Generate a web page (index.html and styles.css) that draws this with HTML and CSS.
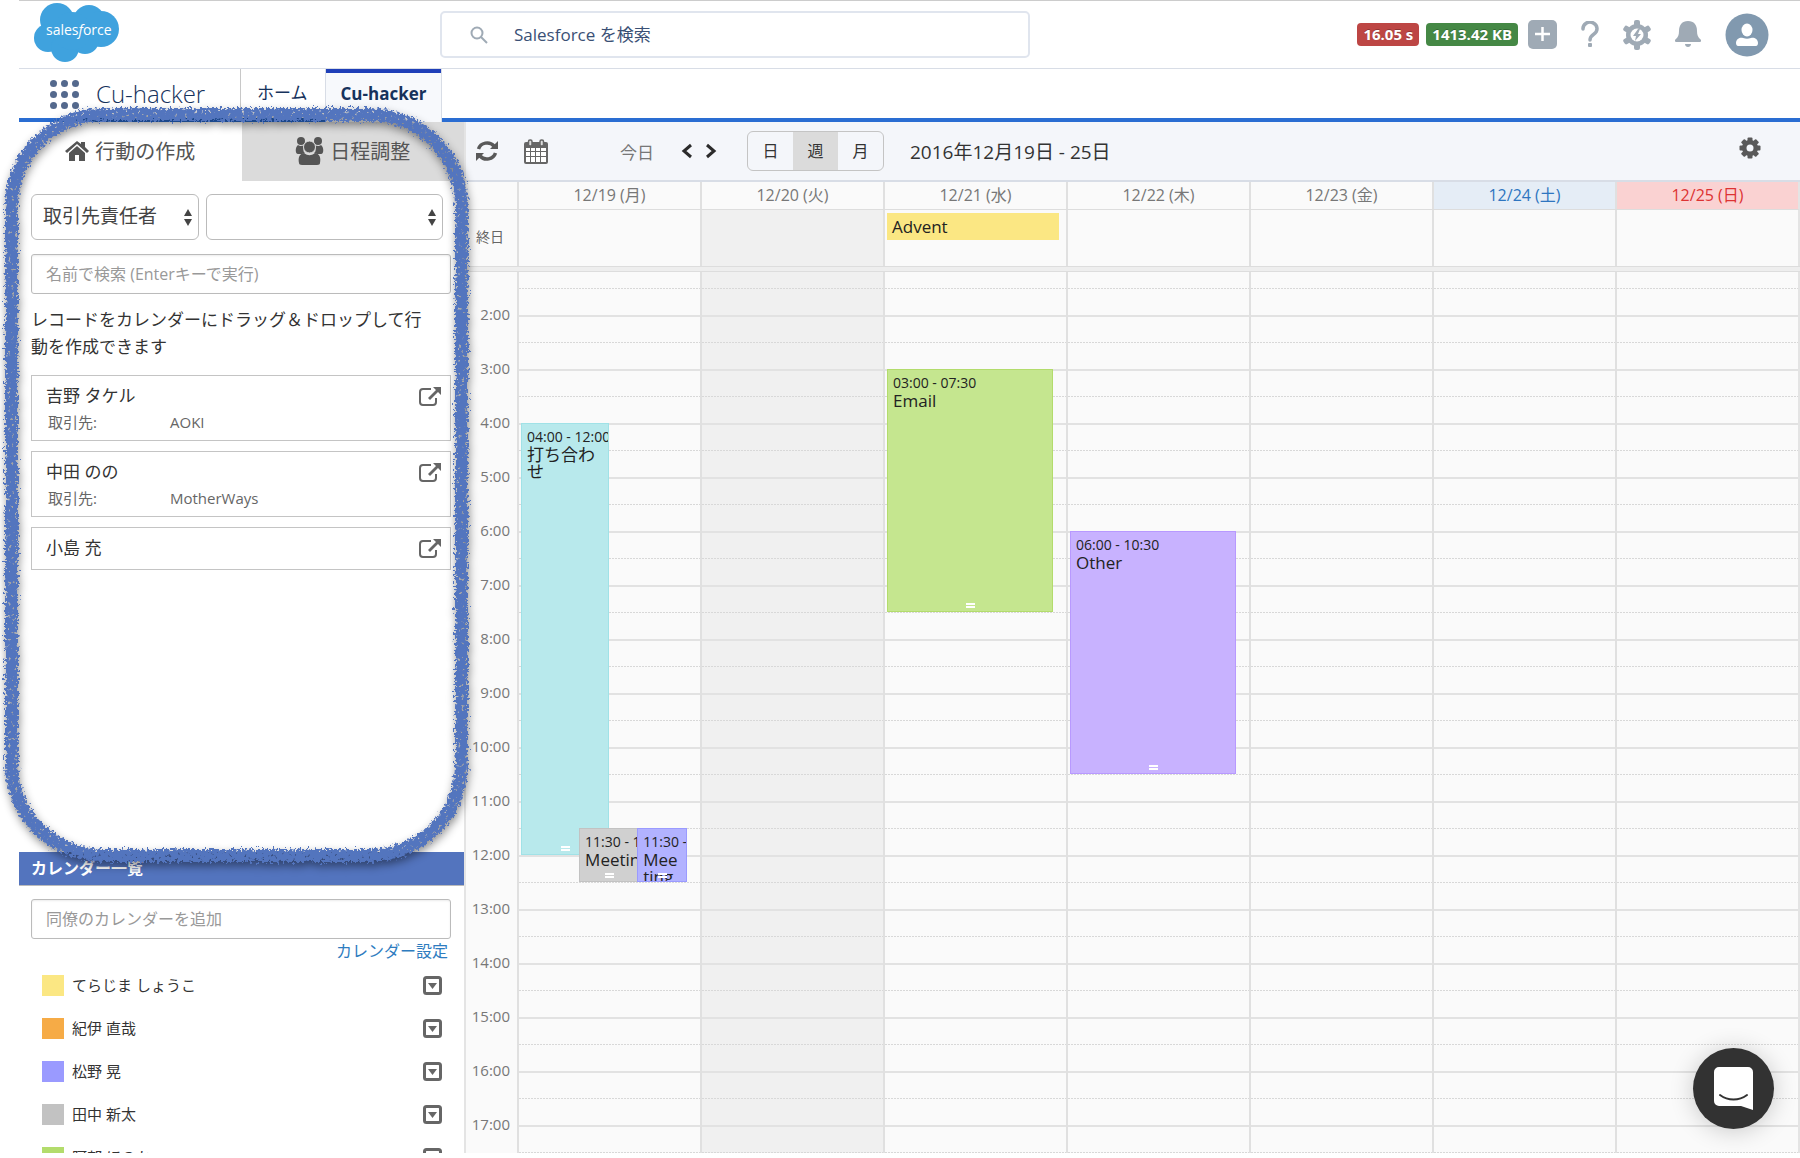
FILE: index.html
```html
<!DOCTYPE html>
<html lang="ja">
<head>
<meta charset="utf-8">
<title>Cu-hacker</title>
<link rel="stylesheet" href="styles.css">
</head>
<body>
<svg class="defs" width="0" height="0" aria-hidden="true">
  <defs>
    <filter id="chalk" x="-5%" y="-5%" width="110%" height="110%">
      <feTurbulence type="fractalNoise" baseFrequency="0.4" numOctaves="2" seed="4" result="noise"/>
      <feDisplacementMap in="SourceGraphic" in2="noise" scale="10" xChannelSelector="R" yChannelSelector="G" result="rough"/>
      <feTurbulence type="fractalNoise" baseFrequency="0.3" numOctaves="2" seed="9"/>
      <feColorMatrix values="0 0 0 0 0  0 0 0 0 0  0 0 0 0 0  -9 0 0 0 6.800" result="grain"/>
      <feComposite in="rough" in2="grain" operator="in"/>
    </filter>
    <symbol id="i-open" viewBox="0 0 22 19">
      <path d="M12 2H4a3 3 0 0 0-3 3v10a3 3 0 0 0 3 3h10a3 3 0 0 0 3-3v-4" fill="none" stroke="currentColor" stroke-width="2"/>
      <path d="M14 0h8v8l-3-3-8 8-2-2 8-8z" fill="currentColor"/>
    </symbol>
    <symbol id="i-drop" viewBox="0 0 19 19">
      <rect x="1.500" y="1.500" width="16" height="16" rx="2" fill="none" stroke="currentColor" stroke-width="3"/>
      <path d="M5 7h9l-4.500 6z" fill="currentColor"/>
    </symbol>
  </defs>
</svg>

<header class="top">
  <svg class="logo" viewBox="0 0 86 60" role="img" aria-label="salesforce">
    <g fill="#3fa2de">
      <circle cx="23" cy="17" r="17"/><circle cx="55" cy="18" r="16"/><circle cx="67" cy="26" r="18"/>
      <circle cx="14" cy="35" r="14"/><circle cx="31" cy="45" r="14"/><circle cx="51" cy="37" r="14"/><circle cx="38" cy="28" r="19"/>
    </g>
    <text x="12" y="32" class="logo-text">sales<tspan font-style="italic">f</tspan>orce</text>
  </svg>
  <label class="global-search">
    <svg width="19" height="19" viewBox="0 0 19 19" fill="none" stroke="#9faab5" stroke-width="2"><circle cx="8" cy="8" r="5.500"/><path d="M12 12l6 6"/></svg>
    <input type="search" placeholder="Salesforce を検索" aria-label="Salesforce を検索">
  </label>
  <div class="tools">
    <span class="badge red">16.05 s</span>
    <span class="badge green">1413.42 KB</span>
    <button class="tool add" aria-label="追加"><svg width="29" height="29" viewBox="0 0 29 29"><rect width="29" height="29" rx="5" fill="#9faab5"/><path d="M14.500 7v14M7 14h15" stroke="#fff" stroke-width="2.500"/></svg></button>
    <button class="tool help" aria-label="ヘルプ"><svg width="18" height="27" viewBox="0 0 18 27"><path d="M2 8a7 6.500 0 1 1 11 5c-3 2-4 3-4 6" fill="none" stroke="#9faab5" stroke-width="3.500" stroke-linecap="round"/><rect x="7" y="22" width="4" height="4" rx="1" fill="#9faab5"/></svg></button>
    <button class="tool setup" aria-label="設定"><svg width="28" height="30" viewBox="-14 -15 28 30"><g fill="#9faab5"><circle r="11"/><g id="tt"><rect x="-3" y="-15" width="6" height="30" rx="2"/></g><use href="#tt" transform="rotate(60)"/><use href="#tt" transform="rotate(120)"/></g><circle r="6.500" fill="#fff"/><path d="M1-6l-5 7h3l-1 5 6-7H1l2-5z" fill="#9faab5"/></svg></button>
    <button class="tool bell" aria-label="通知"><svg width="26" height="27" viewBox="0 0 26 27" fill="#9faab5"><path d="M13 0C7 0 4 4 4 10c0 4-1 6-3 8-2 1-1 3 0 3h24c1 0 2-2 0-3-2-2-3-4-3-8 0-6-3-10-9-10zM10 23h6c0 4-6 4-6 0z"/></svg></button>
    <button class="tool" aria-label="プロフィール"><svg width="44" height="44" viewBox="0 0 44 44"><circle cx="22" cy="22" r="21.500" fill="#8199af"/><ellipse cx="22" cy="17" rx="5.500" ry="6.500" fill="#fff"/><path d="M11 30c0-5 5-6 7-5 3 1 5 1 8 0 2-1 7 0 7 5 0 2-1 3-2 3H13c-1 0-2-1-2-3z" fill="#fff"/></svg></button>
  </div>
</header>

<nav class="nav">
  <button class="launcher" aria-label="アプリケーションランチャー"><i></i><i></i><i></i><i></i><i></i><i></i><i></i><i></i><i></i></button>
  <span class="app-name">Cu-hacker</span>
  <a class="nav-tab" href="#home">ホーム</a>
  <a class="nav-tab active" href="#cu">Cu-hacker</a>
</nav>

<main class="main">
  <aside class="side">
    <section class="create">
      <div class="side-tabs">
        <button class="side-tab"><svg width="24" height="20" viewBox="0 0 24 20" fill="currentColor"><path d="M12 0l4 3V1h4v5l4 4-2 2L12 3 2 12l-2-2z"/><path d="M12 5l8 7v8h-6v-6h-4v6H4v-8z"/></svg>行動の作成</button>
        <button class="side-tab off"><svg width="29" height="28" viewBox="0 0 29 28" fill="currentColor"><circle cx="6" cy="4" r="4"/><circle cx="23" cy="4" r="4"/><path d="M3 8c3 2 5 0 6 1-1 3-1 6 1 7-2 1-4 1-7 1-3 0-3-7 0-9zM26 8c-3 2-5 0-6 1 1 3 1 6-1 7 2 1 4 1 7 1 3 0 3-7 0-9z"/><circle cx="14.500" cy="10" r="6" stroke="#dbdbdb"/><path d="M9 16c4 3 7 3 11 0 5 1 6 5 5 10 0 1-1 2-3 2H7c-2 0-3-1-3-2-1-5 0-9 5-10z"/></svg>日程調整</button>
      </div>
      <div class="create-body">
        <div class="selects">
          <span class="select-box kind"><select aria-label="オブジェクト"><option>取引先責任者</option></select></span>
          <span class="select-box view"><select aria-label="リストビュー"><option></option></select></span>
        </div>
        <input class="field" type="text" placeholder="名前で検索 (Enterキーで実行)" aria-label="名前で検索">
        <p class="hint">レコードをカレンダーにドラッグ＆ドロップして行動を作成できます</p>
        <article class="card"><div><h3>吉野 タケル</h3><dl><dt>取引先:</dt><dd>AOKI</dd></dl></div><a href="#r1" aria-label="開く"><svg width="22" height="19"><use href="#i-open"/></svg></a></article>
        <article class="card"><div><h3>中田 のの</h3><dl><dt>取引先:</dt><dd>MotherWays</dd></dl></div><a href="#r2" aria-label="開く"><svg width="22" height="19"><use href="#i-open"/></svg></a></article>
        <article class="card"><div><h3>小島 充</h3></div><a href="#r3" aria-label="開く"><svg width="22" height="19"><use href="#i-open"/></svg></a></article>
      </div>
      <div class="outline-shadow" aria-hidden="true"><div class="outline"></div></div>
    </section>
    <section class="calendars">
      <h2>カレンダー一覧</h2>
      <input class="field" type="text" placeholder="同僚のカレンダーを追加" aria-label="同僚のカレンダーを追加">
      <a class="cal-settings" href="#settings">カレンダー設定</a>
      <ul>
        <li><i class="swatch yellow"></i><span>てらじま しょうこ</span><button aria-label="メニュー"><svg width="19" height="19"><use href="#i-drop"/></svg></button></li>
        <li><i class="swatch orange"></i><span>紀伊 直哉</span><button aria-label="メニュー"><svg width="19" height="19"><use href="#i-drop"/></svg></button></li>
        <li><i class="swatch violet"></i><span>松野 晃</span><button aria-label="メニュー"><svg width="19" height="19"><use href="#i-drop"/></svg></button></li>
        <li><i class="swatch gray"></i><span>田中 新太</span><button aria-label="メニュー"><svg width="19" height="19"><use href="#i-drop"/></svg></button></li>
        <li><i class="swatch lime"></i><span>阿部 ほのか</span><button aria-label="メニュー"><svg width="19" height="19"><use href="#i-drop"/></svg></button></li>
      </ul>
    </section>
  </aside>

  <section class="week">
    <div class="bar">
      <button class="ico refresh" aria-label="更新"><svg width="22" height="22" viewBox="0 0 22 22"><g fill="none" stroke="#595959" stroke-width="3.500"><path d="M2.500 9A9 8.500 0 0 1 18 6"/><path d="M19.500 13A9 8.500 0 0 1 4 16"/></g><path d="M22 1v8h-8zM0 21v-8h8z" fill="#595959"/></svg></button>
      <button class="ico cal" aria-label="カレンダー"><svg width="24" height="25" viewBox="0 0 24 25"><path d="M2 3h20a2 2 0 0 1 2 2v18a2 2 0 0 1-2 2H2a2 2 0 0 1-2-2V5a2 2 0 0 1 2-2z" fill="#666"/><g fill="#fff"><path d="M2 9h4v3H2zM7 9h4v3H7zM12 9h4v3h-4zM17 9h5v3h-5zM2 13h4v4H2zM7 13h4v4H7zM12 13h4v4h-4zM17 13h5v4h-5zM2 18h4v5H2zM7 18h4v5H7zM12 18h4v5h-4zM17 18h5v5h-5z"/></g><g fill="#ddd" stroke="#666" stroke-width="1.500"><rect x="4.500" y="1" width="3.500" height="6" rx="1.500"/><rect x="16" y="1" width="3.500" height="6" rx="1.500"/></g></svg></button>
      <button class="today">今日</button>
      <button class="ico prev" aria-label="前へ"><svg width="11" height="16" viewBox="0 0 11 16" fill="none" stroke="#2b2b2b" stroke-width="3"><path d="M10 2L3 8l7 6"/></svg></button>
      <button class="ico next" aria-label="次へ"><svg width="11" height="16" viewBox="0 0 11 16" fill="none" stroke="#2b2b2b" stroke-width="3"><path d="M1 2l7 6-7 6"/></svg></button>
      <div class="modes"><button>日</button><button class="on">週</button><button>月</button></div>
      <h1>2016年12月19日 - 25日</h1>
      <button class="ico gear" aria-label="設定"><svg width="22" height="22" viewBox="-11 -11 22 22"><g fill="#595959"><circle r="8"/><rect id="t2" x="-2.500" y="-10.500" width="5" height="21" rx="1"/><use href="#t2" transform="rotate(45)"/><use href="#t2" transform="rotate(90)"/><use href="#t2" transform="rotate(135)"/></g><circle r="3.500" fill="#f4f6fa"/></svg></button>
    </div>
    <div class="row heads">
      <div class="axis"></div>
      <div>12/19 (月)</div><div>12/20 (火)</div><div>12/21 (水)</div><div>12/22 (木)</div><div>12/23 (金)</div><div class="sat">12/24 (土)</div><div class="sun">12/25 (日)</div>
    </div>
    <div class="row allday">
      <div class="axis">終日</div>
      <div></div><div class="marked"></div><div><div class="all-event">Advent</div></div><div></div><div></div><div></div><div></div>
    </div>
    <div class="divider"></div>
    <div class="scroller">
      <div class="row hours">
        <div class="axis times">
          <span>2:00</span><span>3:00</span><span>4:00</span><span>5:00</span><span>6:00</span><span>7:00</span><span>8:00</span><span>9:00</span><span>10:00</span><span>11:00</span><span>12:00</span><span>13:00</span><span>14:00</span><span>15:00</span><span>16:00</span><span>17:00</span>
        </div>
        <div class="day"><div class="lane">
          <div class="event teal" style="--start:4;--len:8;--left:0%;--width:53%"><time>04:00 - 12:00</time><b>打ち合わせ</b></div>
          <div class="event gray" style="--start:11.5;--len:1;--left:35%;--width:36%"><time>11:30 - 12:30</time><b>Meeting</b></div>
          <div class="event violet" style="--start:11.5;--len:1;--left:70%;--width:30%"><time>11:30 - 12:30</time><b>Meeting</b></div>
        </div></div>
        <div class="day marked"></div>
        <div class="day"><div class="lane"><div class="event lime" style="--start:3;--len:4.5;--left:0%;--width:100%"><time>03:00 - 07:30</time><b>Email</b></div></div></div>
        <div class="day"><div class="lane"><div class="event purple" style="--start:6;--len:4.5;--left:0%;--width:100%"><time>06:00 - 10:30</time><b>Other</b></div></div></div>
        <div class="day"></div><div class="day"></div><div class="day"></div>
      </div>
    </div>
  </section>
</main>

<button class="chat" aria-label="チャット"><svg width="39" height="44" viewBox="0 0 39 44"><path d="M5 0h29a5 5 0 0 1 5 5v38l-12-4H5a5 5 0 0 1-5-5V5a5 5 0 0 1 5-5z" fill="#fff"/><path d="M6 28c8 6 19 6 27 0" fill="none" stroke="#323232" stroke-width="2" stroke-linecap="round"/></svg></button>
</body>
</html>
```

FILE: styles.css
```css
* { box-sizing: border-box; }

body {
  margin: 0;
  height: 100vh;
  padding: 0 0 5px 19px;
  display: flex;
  flex-direction: column;
  overflow: hidden;
  background: #fff;
  color: #333;
  font-family: "Open Sans", "Noto Sans CJK JP", sans-serif;
  font-size: 16px;
}

button, input, select { font: inherit; color: inherit; }
button { border: 0; padding: 0; background: none; cursor: pointer; }
button svg { display: block; }
a { color: inherit; text-decoration: none; }
h1, h2, h3, p, ul, dl, dd { margin: 0; padding: 0; font-weight: 400; }
.defs { position: absolute; }

/* header */
.top {
  flex: none;
  height: 69px;
  display: flex;
  align-items: center;
  padding: 0 31px 0 15px;
  border-top: 1px solid #ccc;
  border-bottom: 1px solid #d8dde6;
}
.logo { width: 86px; height: 60px; align-self: flex-start; margin-top: 2px; }
.logo-text { font-size: 14px; fill: #fff; font-weight: 400; }
.global-search {
  width: 34%;
  height: 47px;
  margin-left: 320px;
  display: flex;
  align-items: center;
  gap: 26px;
  padding: 0 27px;
  border: 2px solid #e0e5ee;
  border-radius: 5px;
}
.global-search svg { flex: none; }
.global-search input {
  flex: 1;
  min-width: 0;
  padding: 0;
  border: 0;
  outline: 0;
  background: none;
  font-size: 17px;
}
.global-search input::placeholder { color: #3a5075; opacity: 1; }
.tools { margin-left: auto; display: flex; align-items: center; }
.badge {
  height: 23px;
  margin-right: 7px;
  padding: 0 6px;
  border-radius: 4px;
  color: #fff;
  font-size: 15px;
  font-weight: 700;
  line-height: 22px;
  text-shadow: 0 -1px 0 rgba(0, 0, 0, .25);
}
.red { background: #bd4644; }
.green { background: #458845; margin-right: 10px; }
.add, .help, .setup, .bell { margin-right: 24px; }

/* navigation */
.nav {
  flex: none;
  height: 53px;
  display: flex;
  padding-left: 31px;
  border-bottom: 4px solid #2a6dd2;
  color: #16325c;
}
.launcher {
  display: grid;
  grid-template-columns: repeat(3, 7px);
  gap: 4px;
  align-content: start;
  margin-top: 11px;
}
.launcher i { width: 7px; height: 7px; border-radius: 50%; background: #54698d; }
.app-name {
  width: 144px;
  margin-left: 17px;
  font-size: 24px;
  font-weight: 300;
  line-height: 49px;
}
.nav-tab {
  padding: 0 17px 0 16px;
  border-left: 1px solid #c8c8c8;
  line-height: 48px;
  font-size: 17px;
}
.nav-tab.active {
  height: 53px;
  padding: 0 15px;
  border: solid #d8dde6;
  border-width: 0 1px;
  background: #f7f9fc;
  box-shadow: inset 0 4px 0 #1f3fb8;
  font-weight: 700;
  line-height: 50px;
}

.main { flex: 1; min-height: 0; display: flex; }

/* left panel */
.side {
  flex: none;
  width: 447px;
  display: flex;
  flex-direction: column;
  border-right: 2px solid #e4e4e4;
}
.create { flex: 1; min-height: 0; position: relative; }
.side-tabs { display: flex; height: 59px; color: #555; }
.side-tab {
  flex: 1 1 0;
  display: flex;
  align-items: center;
  justify-content: center;
  gap: 6px;
  padding-bottom: 2px;
  font-size: 20px;
  white-space: nowrap;
}
.side-tab.off { background: #dbdbdb; }
.create-body { padding: 13px 13px 0 12px; }
.selects { display: flex; gap: 7px; margin: 0 8px 14px 0; }
.select-box { position: relative; height: 46px; }
.kind { flex: 0 0 168px; }
.view { flex: 1; }
.select-box select {
  appearance: none;
  width: 100%;
  height: 100%;
  padding: 0 11px 3px;
  border: 1px solid #bbb;
  border-radius: 6px;
  background: #fff;
  color: #444;
  font-size: 19px;
}
.select-box::before, .select-box::after {
  content: "";
  position: absolute;
  right: 7px;
  border: 4px solid transparent;
}
.select-box::before { top: 11px; border-bottom: 7px solid #444; }
.select-box::after { top: 25px; border-top: 7px solid #444; }
.field {
  display: block;
  width: 100%;
  height: 40px;
  padding: 0 14px;
  border: 1px solid #bbb;
  border-radius: 3px;
  box-shadow: inset 0 1px 2px rgba(0, 0, 0, .08);
}
.field::placeholder { color: #999; opacity: 1; }
.hint { margin: 12px 0 15px; padding-right: 16px; font-size: 17px; line-height: 27px; }
.card {
  display: flex;
  justify-content: space-between;
  min-height: 43px;
  margin-bottom: 10px;
  padding: 6px 9px 6px 14px;
  border: 1px solid #c4c4c4;
}
.card h3 { font-size: 17px; line-height: 28px; }
.card dl { display: flex; padding: 0 2px; font-size: 15px; line-height: 24px; color: #666; }
.card dt { width: 122px; }
.card a { color: #666; padding-top: 5px; }
.card svg { display: block; }

/* chalk outline that calls out the panel */
.outline-shadow {
  position: absolute;
  inset: -14px -4px -10px -14px;
  z-index: 2;
  pointer-events: none;
  filter: drop-shadow(1px 4px 4px rgba(0, 0, 0, .45));
}
.outline {
  height: 100%;
  border: 13px solid #5374be;
  border-radius: 98px;
  filter: url(#chalk);
}

.calendars { flex: 0 0 301px; overflow: hidden; }
.calendars h2 {
  height: 34px;
  padding-left: 12px;
  border-bottom: 1px solid #bbb;
  background: #5374be;
  color: #fff;
  font-size: 16px;
  font-weight: 700;
  line-height: 32px;
}
.calendars .field { width: calc(100% - 25px); margin: 13px 13px 0 12px; }
.cal-settings { display: block; margin-right: 16px; text-align: right; line-height: 25px; color: #2e7cbf; }
.calendars ul { list-style: none; }
.calendars li {
  display: flex;
  align-items: center;
  height: 43px;
  padding: 0 22px 0 23px;
  font-size: 15px;
}
.calendars li span { flex: 1; margin-left: 8px; padding-bottom: 2px; }
.calendars li button { color: #666; }
.swatch { width: 22px; height: 21px; }
.yellow { background: #fbe783; }
.orange { background: #f6ab46; }
.swatch.violet { background: #9a9aff; }
.swatch.gray { background: #c2c2c2; }
.swatch.lime { background: #b3dc6c; }

/* week view */
.week { flex: 1; min-width: 0; display: flex; flex-direction: column; background: #fafafa; }
.bar {
  flex: none;
  height: 60px;
  display: flex;
  align-items: center;
  padding: 0 39px 0 10px;
  border-bottom: 2px solid #d8dde6;
  background: #f4f6fa;
}
.refresh { margin-right: 26px; }
.today { margin: 0 27px 0 72px; color: #777; font-size: 17px; }
.prev { margin-right: 14px; }
.modes {
  display: flex;
  height: 40px;
  margin: 0 26px 0 30px;
  border: 1px solid #c4c4c4;
  border-radius: 6px;
  overflow: hidden;
}
.modes button { width: 45px; padding-bottom: 2px; }
.modes .on { background: #dbdbdb; }
.bar h1 { font-size: 19px; }
.gear { margin: 0 0 6px auto; }

.row {
  display: grid;
  grid-template-columns: 51px repeat(7, 1fr);
  border-right: 2px solid #e4e4e4;
}
.row > div + div { border-left: 2px solid #e0e0e0; min-width: 0; }
.row .marked { background-color: #f0f0f0; --col: #f0f0f0; }
.heads {
  flex: none;
  height: 28px;
  border-bottom: 1px solid #ddd;
  color: #777;
  text-align: center;
  line-height: 26px;
}
.heads .sat { background: #e5edf6; color: #2e75c0; }
.heads .sun { background: #fad2d2; color: #d33; }
.allday { flex: none; height: 56px; }
.allday .axis { padding-left: 10px; color: #666; font-size: 14px; line-height: 54px; }
.all-event {
  height: 27px;
  margin: 3px 7px 0 2px;
  padding: 0 5px;
  background: #fbe783;
  color: #222;
  font-size: 17px;
  line-height: 27px;
}
.divider { flex: none; height: 6px; border: solid #ddd; border-width: 1px 0; background: #eee; }
.scroller { flex: 1; min-height: 0; overflow: hidden; }
.hours { --hour: 54px; height: calc(17 * var(--hour)); margin-top: -11px; }
.times { padding: 27px 7px 0 0; text-align: right; color: #777; font-size: 15px; }
.times span { display: block; height: 54px; line-height: 53px; }
.day {
  --col: #fafafa;
  background-image:
    linear-gradient(#e2e2e2 2px, var(--col) 2px, var(--col) 27px, transparent 27px, transparent 28px, var(--col) 28px),
    linear-gradient(to right, #d8d8d8 2px, transparent 2px);
  background-size: 100% var(--hour), 3px 100%;
}
.lane { position: relative; height: 100%; margin: 0 13px 0 2px; }
.event {
  position: absolute;
  top: calc((var(--start) - 1) * var(--hour));
  height: calc(var(--len) * var(--hour));
  left: var(--left);
  width: var(--width);
  padding: 4px 0 0 5px;
  border: 1px solid;
  overflow: hidden;
  color: #222;
}
.event time { display: block; font-size: 14px; line-height: 18px; white-space: nowrap; }
.event b { display: block; padding-right: 8px; font-size: 17px; font-weight: 400; line-height: 17px; overflow-wrap: anywhere; }
.event.gray b { padding: 0; white-space: nowrap; }
.event::after {
  content: "";
  position: absolute;
  bottom: 3px;
  left: calc(50% - 4px);
  width: 9px;
  height: 1px;
  border: solid #fff;
  border-width: 2px 0;
}
.event.teal { background: #b8e9ec; border-color: #a0e2e7; }
.event.gray { background: #d0d0d0; border-color: #c2c2c2; }
.event.violet { background: #b2b2ff; border-color: #9a9aff; }
.event.lime { background: #c5e68f; border-color: #b3dc6c; }
.event.purple { background: #c8b2ff; border-color: #b899ff; }

.chat {
  position: fixed;
  right: 26px;
  bottom: 29px;
  width: 81px;
  height: 81px;
  display: grid;
  place-items: center;
  border-radius: 50%;
  background: #323232;
  box-shadow: 0 2px 24px rgba(0, 0, 0, .2);
}
```
